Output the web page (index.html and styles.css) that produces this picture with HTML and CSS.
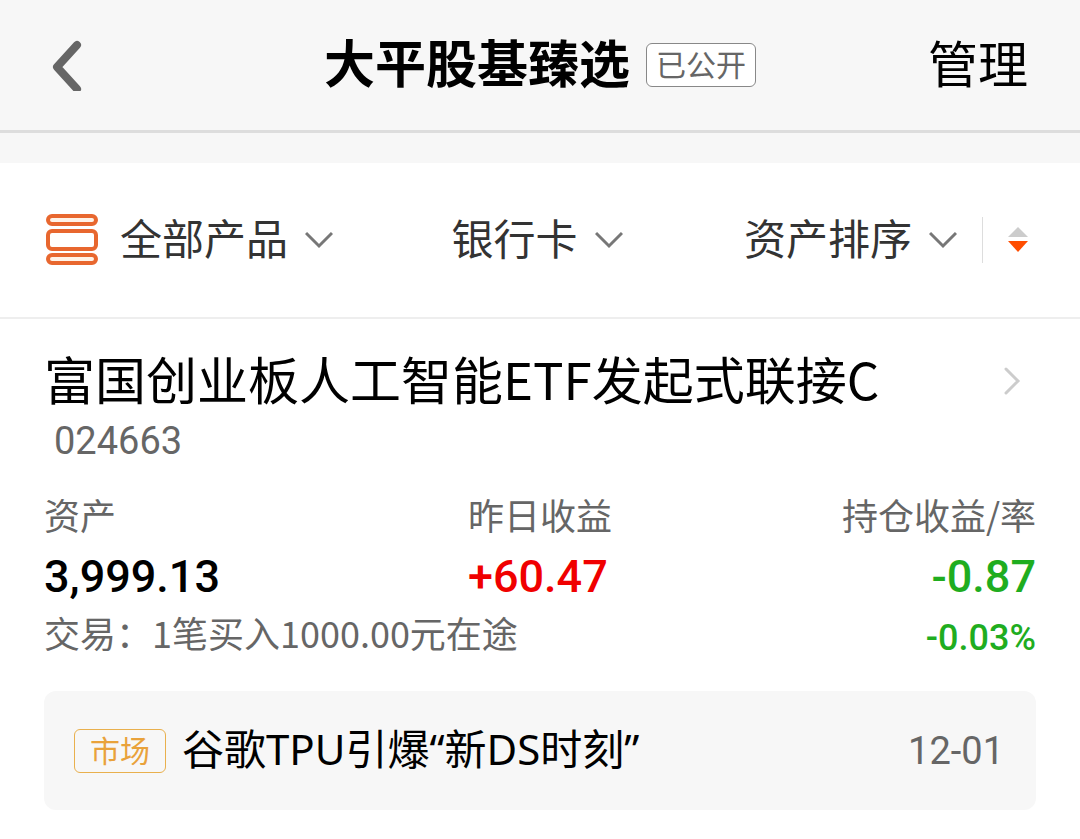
FILE: index.html
```html
<!DOCTYPE html>
<html lang="zh-CN">
<head>
  <meta charset="UTF-8" />
  <meta name="viewport" content="width=device-width, initial-scale=1.0"/>
  <title>大平股基臻选</title>
  <link rel="stylesheet" href="styles.css">
</head>
<body>
  <header class="topbar">
    <button class="back" aria-label="返回">
      <svg width="30" height="52" viewBox="0 0 30 52"><path d="M25 6 5 28 25 50" fill="none" stroke="#666" stroke-width="8" stroke-linecap="round" stroke-linejoin="round"/></svg>
    </button>
    <div class="heading">
      <h1>大平股基臻选</h1>
      <span class="tag">已公开</span>
    </div>
    <button class="manage">管理</button>
  </header>

  <main>
    <div class="filters">
      <label class="filter">
        <svg class="list-icon" width="52" height="52" viewBox="0 0 52 52" fill="#fff3e8" stroke="#e8672f" stroke-width="4">
          <rect x="2" y="2" width="48" height="8" rx="4"/>
          <rect x="2" y="17" width="48" height="18" rx="4" fill="#fff"/>
          <rect x="2" y="41" width="48" height="8" rx="4"/>
        </svg>
        <select aria-label="产品"><option>全部产品</option></select>
        <svg class="arrow" width="28" height="18" viewBox="0 0 28 18"><path d="M1 2 14 15 27 2"/></svg>
      </label>
      <label class="filter">
        <select aria-label="支付方式"><option>银行卡</option></select>
        <svg class="arrow" width="28" height="18" viewBox="0 0 28 18"><path d="M1 2 14 15 27 2"/></svg>
      </label>
      <div class="sorting">
        <label class="filter">
          <select aria-label="排序"><option>资产排序</option></select>
          <svg class="arrow" width="28" height="18" viewBox="0 0 28 18"><path d="M1 2 14 15 27 2"/></svg>
        </label>
        <button class="sort" aria-label="切换排序方向">
          <svg width="20" height="26" viewBox="0 0 20 26"><path d="M10 0 20 10H0z" fill="#ccc"/><path d="M0 14h20L10 25z" fill="#ff4d00"/></svg>
        </button>
      </div>
    </div>

    <section class="fund">
      <a class="fund-name" href="#">
        <h2>富国创业板人工智能ETF发起式联接C</h2>
        <svg width="18" height="28" viewBox="0 0 18 28"><path d="M3 2 15 14 3 26" fill="none" stroke="#ccc" stroke-width="3" stroke-linecap="round"/></svg>
      </a>
      <p class="code">024663</p>

      <dl class="figures">
        <div>
          <dt>资产</dt>
          <dd>3,999.13</dd>
        </div>
        <div>
          <dt>昨日收益</dt>
          <dd class="up">+60.47</dd>
        </div>
        <div class="last">
          <dt>持仓收益/率</dt>
          <dd class="down">-0.87</dd>
        </div>
      </dl>
      <div class="trade">
        <p>交易：1笔买入1000.00元在途</p>
        <p class="rate down">-0.03%</p>
      </div>

      <a class="news" href="#">
        <span class="tag market">市场</span>
        <span class="news-title">谷歌TPU引爆“新DS时刻”</span>
        <time>12-01</time>
      </a>
    </section>
  </main>
</body>
</html>
```
FILE: styles.css
```css
*{margin:0;padding:0;box-sizing:border-box}
body{font-family:"Noto Sans CJK SC",sans-serif;background:#fff;color:#000}
button,select{font-family:inherit;color:inherit;background:none;border:none;cursor:pointer}
a{color:inherit;text-decoration:none}
svg{display:block;flex:none}

.topbar{display:grid;grid-template-columns:1fr auto 1fr;align-items:center;height:133px;padding:0 52px;background:#f7f7f7;border-bottom:3px solid #ddd}
.back{justify-self:start}
.heading{display:flex;align-items:center;gap:16px}
.heading h1{font-size:51px;line-height:66px;font-weight:700;padding-bottom:8px}
.manage{justify-self:end;font-size:50px;line-height:66px;padding-bottom:8px}
.tag{font-size:30px;line-height:38px;padding:0 9px 4px;border:1px solid #888;border-radius:6px;background:#fff;color:#666}

main{border-top:30px solid #f7f7f7}
.filters{display:grid;grid-template-columns:1fr auto 1fr;align-items:center;height:156px;padding:0 52px 0 46px;border-bottom:2px solid #eee}
.filter{display:flex;align-items:center;gap:16px}
.filter select{appearance:none;font-size:42px;line-height:60px;padding-bottom:6px;color:#333}
.list-icon{margin-right:6px}
.arrow{fill:none;stroke:#777;stroke-width:3}
.sorting{display:flex;align-items:center;justify-content:flex-end}
.sort{margin-left:25px;padding:10px 0 10px 25px;border-left:1px solid #ddd}

.fund{padding:26px 44px 28px}
.fund-name{display:flex;justify-content:space-between;align-items:center;padding-right:15px}
.fund-name h2{font-size:51px;line-height:66px;font-weight:400}
.fund-name svg{margin-top:6px}
.code{font-family:Roboto,sans-serif;font-size:38px;line-height:50px;padding-left:10px;margin-top:5px;color:#666}
.figures{display:grid;grid-template-columns:1fr auto 1fr;margin-top:24px}
.figures dt{font-size:36px;line-height:48px;color:#666}
.figures dd{font-family:Roboto,sans-serif;font-size:45px;line-height:66px;font-weight:500;margin-top:6px}
.last{text-align:right}
.trade{display:flex;justify-content:space-between;align-items:flex-start;font-size:36px;line-height:44px;color:#666}
.trade .rate{font-family:Roboto,sans-serif;font-weight:500;padding-top:6px}
.figures .up{color:#f00000}
.figures .down,.trade .down{color:#1fad1f}

.news{display:flex;align-items:center;gap:16px;height:119px;margin-top:31px;padding:0 32px 0 30px;background:#f7f7f7;border-radius:12px}
.news-title{flex:1;font-family:"Noto Sans","Noto Sans CJK SC",sans-serif;font-size:42px;line-height:60px;padding-bottom:4px}
.news time{font-family:Roboto,sans-serif;font-size:38px;color:#666}
.market{border-color:#e9b04d;padding:0 15px 4px;background:none;color:#e9a23b}
```
